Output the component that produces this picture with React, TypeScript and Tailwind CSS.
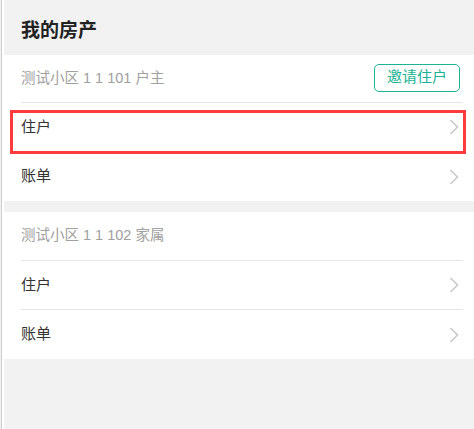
import React from "react";

const Chevron = () => (
  <svg width="10" height="16" viewBox="0 0 10 16" fill="none">
    <path d="M1.5 1 L8.5 8 L1.5 15" stroke="#c7c7c7" strokeWidth="1.5" />
  </svg>
);

const Row = ({ label, last }: { label: string; last?: boolean }) => (
  <div className={`ml-[17px] mr-[11px] h-[49px] flex items-center justify-between pr-[4px] ${last ? "" : "border-b border-[#e5e5e5]"}`}>
    <span className="text-[15px] text-[#333]">{label}</span>
    <Chevron />
  </div>
);

export default function App() {
  return (
    <div
      className="w-[474px] h-[429px] bg-[#f2f2f2] pl-px overflow-hidden"
      style={{ fontFamily: '"Liberation Sans", "Noto Sans CJK SC", sans-serif' }}
    >
      <div className="h-full border-l border-[#cfcfcf] pl-[2px] bg-white">
        <div className="h-full bg-[#f2f2f2]">
          <div className="h-[55px] flex items-center pl-[17px] pt-[8px]">
            <h1 className="text-[19px] font-bold text-[#222]">我的房产</h1>
          </div>

          <div className="relative bg-white">
            <div className="ml-[17px] mr-[11px] h-[48px] flex items-center justify-between border-b border-[#e5e5e5] pr-[3px]">
              <span className="text-[14.5px] text-[#a0a0a0]">测试小区 1 1 101 户主</span>
              <button className="mb-[2px] h-[28px] w-[86px] rounded-[5px] border border-[#1bb394] text-[15px] text-[#1bb394] flex items-center justify-center">
                邀请住户
              </button>
            </div>
            <Row label="住户" />
            <Row label="账单" last />
            <div className="absolute left-[6px] top-[55px] w-[456px] h-[44px] border-[3px] border-[#ff3b3b]" />
          </div>

          <div className="h-[11px]" />

          <div className="bg-white">
            <div className="ml-[17px] mr-[11px] h-[49px] flex items-center border-b border-[#e5e5e5]">
              <span className="text-[14.5px] text-[#a0a0a0]">测试小区 1 1 102 家属</span>
            </div>
            <Row label="住户" />
            <Row label="账单" last />
          </div>
        </div>
      </div>
    </div>
  );
}
